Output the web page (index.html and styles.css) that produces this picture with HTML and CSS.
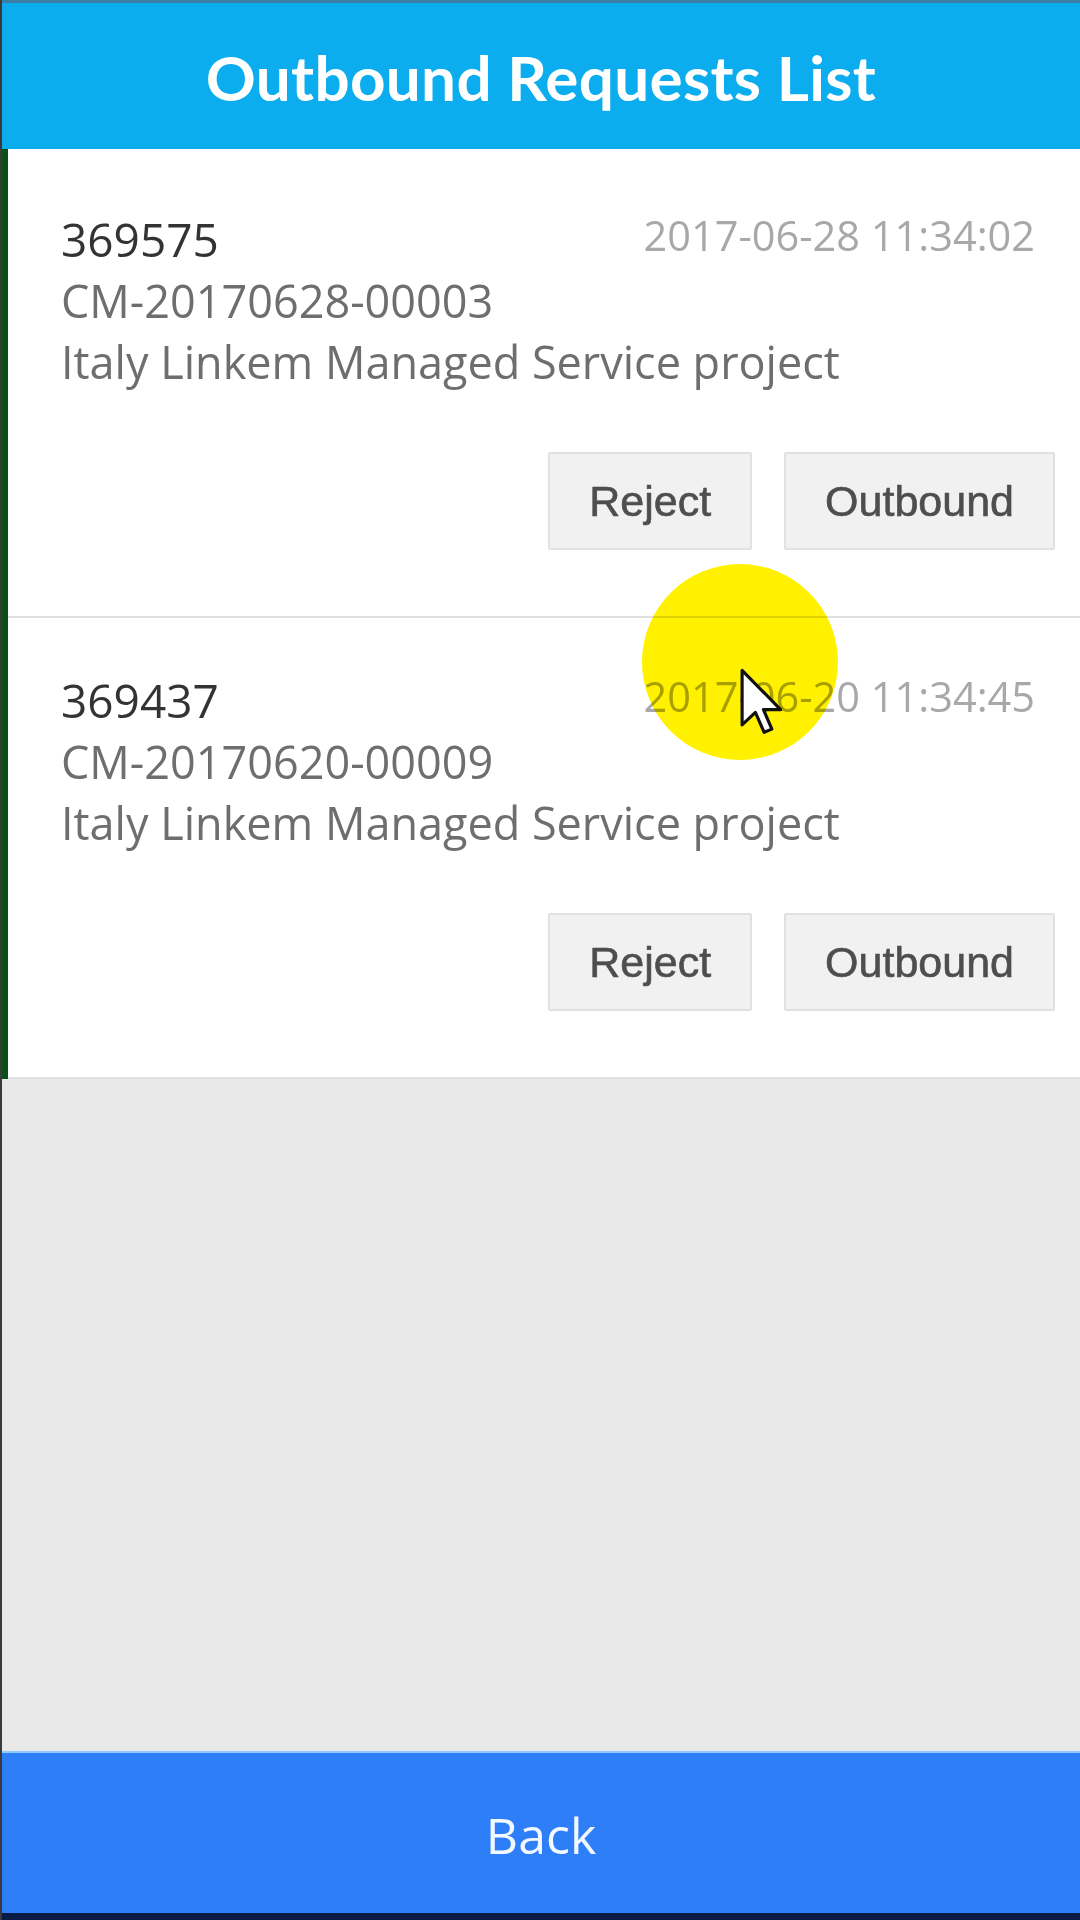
FILE: index.html
```html
<!DOCTYPE html>
<html lang="en">
<head>
<meta charset="utf-8">
<title>Outbound Requests List</title>
<link rel="stylesheet" href="styles.css">
</head>
<body>
<div class="app">
  <header class="topbar"><h1 class="title">Outbound Requests List</h1></header>
  <main class="content">
    <ul class="list">
      <li class="card">
        <div class="row-top">
          <span class="req-no">369575</span>
          <span class="req-date">2017-06-28 11:34:02</span>
        </div>
        <div class="line code">CM-20170628-00003</div>
        <div class="line project">Italy Linkem Managed Service project</div>
        <div class="actions">
          <button class="btn">Reject</button>
          <button class="btn">Outbound</button>
        </div>
      </li>
      <li class="card">
        <div class="row-top">
          <span class="req-no">369437</span>
          <span class="req-date">2017-06-20 11:34:45</span>
        </div>
        <div class="line code">CM-20170620-00009</div>
        <div class="line project">Italy Linkem Managed Service project</div>
        <div class="actions">
          <button class="btn">Reject</button>
          <button class="btn">Outbound</button>
        </div>
      </li>
    </ul>
  </main>
  <footer class="bottombar"><button class="back">Back</button></footer>
  <div class="highlight"></div>
  <svg class="cursor" viewBox="0 0 12 19" width="42" height="67" aria-hidden="true">
    <path d="M0.6 0.6 L0.6 16.2 L4.4 12.6 L6.9 18.3 L9.1 17.4 L6.7 11.8 L11.6 11.8 Z" fill="#fff" stroke="#111" stroke-width="0.9" stroke-linejoin="round"/>
  </svg>
</div>
</body>
</html>
```
FILE: styles.css
```css
* { box-sizing: border-box; }
html, body { margin: 0; padding: 0; }
body {
  width: 1080px;
  height: 1920px;
  overflow: hidden;
  font-family: "Open Sans", "Noto Sans", sans-serif;
  background: #e9e9e9;
}
.app {
  position: relative;
  display: flex;
  flex-direction: column;
  height: 1920px;
  border-left: 2px solid #3a3a3a;
}
.topbar {
  height: 149px;
  background: #0badee;
  border-top: 3px solid #3b7fa6;
  display: flex;
  align-items: center;
  justify-content: center;
  flex: none;
}
.title {
  margin: 0;
  color: #fff;
  font-family: Lato, "Open Sans", sans-serif;
  font-weight: 700;
  font-size: 62px;
  letter-spacing: 0.3px;
  padding-top: 2px;
}
.content {
  flex: 1;
  background: #e9e9e9;
}
.list {
  list-style: none;
  margin: 0;
  padding: 8px 0 0 0;
  background: #fff;
  border-left: 6px solid #0a5016;
}
.card {
  background: #fff;
  padding: 52px 25px 66px 53px;
  border-bottom: 2px solid #e0e0e0;
}
.row-top {
  display: flex;
  justify-content: space-between;
  align-items: flex-start;
  padding-right: 20px;
}
.req-no {
  font-size: 46px;
  line-height: 61px;
  color: #333;
}
.req-date {
  font-size: 41.5px;
  line-height: 61px;
  color: #a8a8a8;
  margin-top: -4px;
}
.line {
  font-size: 45px;
  line-height: 61px;
  color: #6e6e6e;
}
.actions {
  display: flex;
  justify-content: flex-end;
  gap: 32px;
  margin-top: 60px;
}
.btn {
  height: 98px;
  padding: 0 39px;
  background: #f1f1f1;
  border: 2px solid #e1e1e1;
  border-radius: 2px;
  font-family: "Liberation Sans", Arial, sans-serif;
  font-size: 43px;
  color: #4e4e4e;
  -webkit-text-stroke: 0.6px #4e4e4e;
}
.bottombar {
  height: 169px;
  flex: none;
  background: #2e7ef8;
  border-top: 2px solid #8fcaff;
  border-bottom: 7px solid #0a1c45;
  display: flex;
}
.back {
  flex: 1;
  background: transparent;
  border: 0;
  color: #f2f8ff;
  font-family: "Open Sans", "Noto Sans", sans-serif;
  font-size: 50px;
  padding-top: 4px;
}
.highlight {
  position: absolute;
  left: 640px;
  top: 564px;
  width: 196px;
  height: 196px;
  border-radius: 50%;
  background: #fff100;
  mix-blend-mode: multiply;
}
.cursor {
  position: absolute;
  left: 738px;
  top: 668px;
}
```
